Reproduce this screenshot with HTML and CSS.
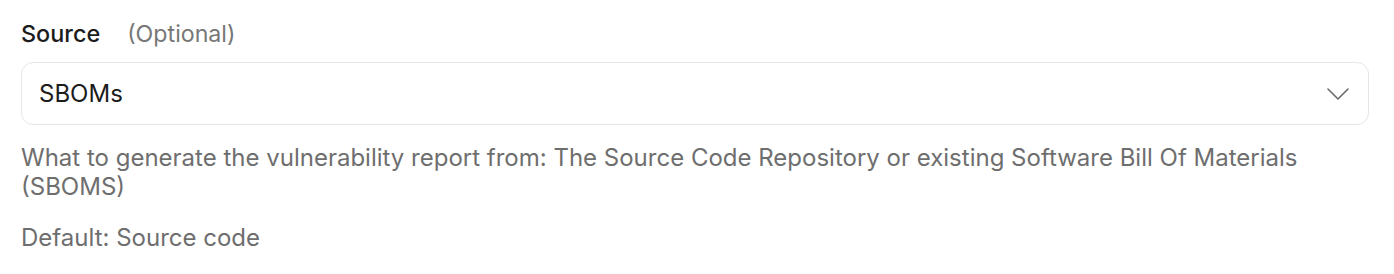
FILE: index.html
```html
<!DOCTYPE html>
<html>
<head>
<meta charset="utf-8">
<link rel="stylesheet" href="styles.css">
</head>
<body>
<div class="field">
  <div class="label-row">
    <span class="label">Source</span>
    <span class="optional">(Optional)</span>
  </div>
  <div class="select">
    <span class="value">SBOMs</span>
    <svg class="chevron" width="22" height="12" viewBox="0 0 22 12"><path d="M1 1 L11 11 L21 1" fill="none" stroke="#6b6b6b" stroke-width="1.6" stroke-linecap="round" stroke-linejoin="round"/></svg>
  </div>
  <p class="help">What to generate the vulnerability report from: The Source Code Repository or existing Software Bill Of Materials (SBOMS)</p>
  <p class="default">Default: Source code</p>
</div>
</body>
</html>
```
FILE: styles.css
```css
html, body {
  margin: 0;
  padding: 0;
  background: #ffffff;
}
body {
  font-family: Inter, "Noto Sans", sans-serif;
  width: 1394px;
  height: 274px;
  overflow: hidden;
}
.field {
  padding: 18px 25px 0 21px;
}
.label-row {
  display: flex;
  gap: 27px;
  align-items: baseline;
  height: 32px;
  line-height: 32px;
}
.label {
  font-size: 23.4px;
  font-weight: 500;
  color: #1c1c1c;
}
.optional {
  font-size: 23.2px;
  color: #777777;
}
.select {
  margin-top: 12px;
  height: 61px;
  border: 1px solid #e6e6e6;
  border-radius: 12px;
  display: flex;
  align-items: center;
  justify-content: space-between;
  padding: 0 19px 0 17px;
}
.value {
  font-size: 24px;
  line-height: 29px;
  color: #1c1c1c;
}
.chevron {
  display: block;
}
.help {
  margin: 18px 0 0;
  font-size: 24px;
  line-height: 29px;
  color: #6e6e6e;
}
.default {
  margin: 22px 0 0;
  font-size: 24px;
  line-height: 29px;
  color: #6e6e6e;
}
```
